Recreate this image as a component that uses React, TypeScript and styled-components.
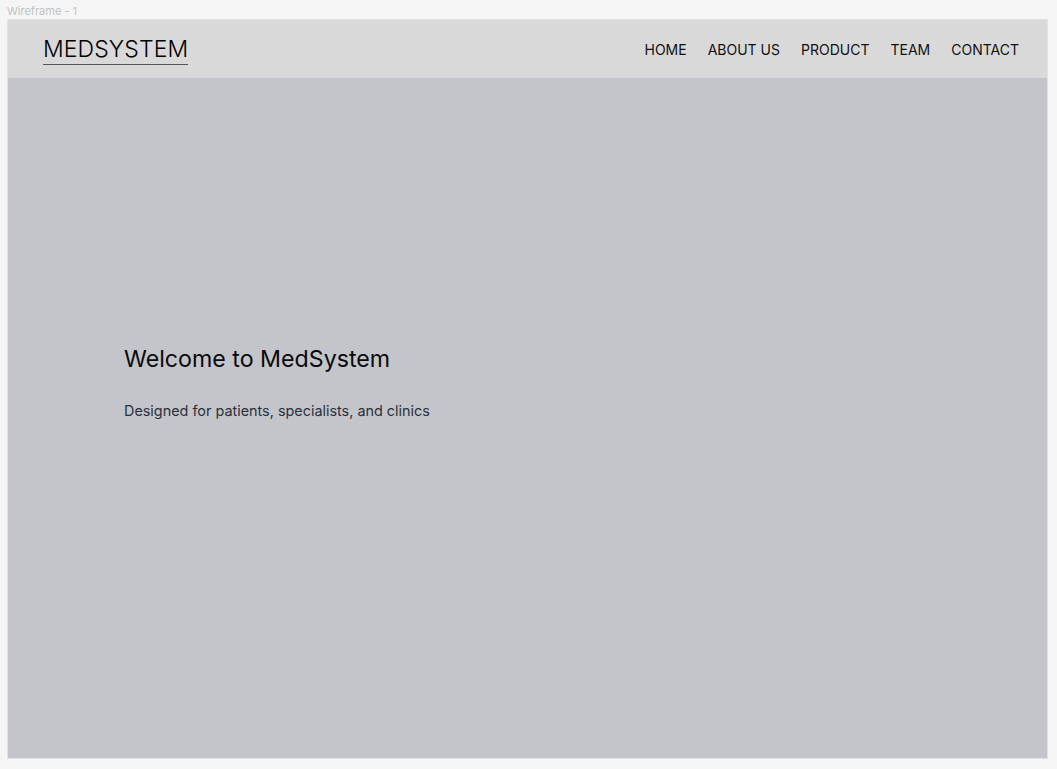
import React from "react";
import styled, { createGlobalStyle } from "styled-components";

const Global = createGlobalStyle`
  html, body { margin: 0; padding: 0; background: #f5f5f5; }
  body { font-family: Inter, "Noto Sans", sans-serif; }
`;

const Page = styled.div`
  width: 1057px;
  height: 769px;
  box-sizing: border-box;
  padding: 4px 0 0 7px;
  display: flex;
  flex-direction: column;
`;

const FrameLabel = styled.div`
  font-size: 11px;
  line-height: 14px;
  color: #c2c2c2;
  height: 14px;
  margin-bottom: 1px;
`;

const Frame = styled.div`
  width: 1041px;
  height: 740px;
  box-sizing: border-box;
  border: 1px solid #e2e2e6;
  display: flex;
  flex-direction: column;
  background: #c4c5ca;
`;

const Header = styled.header`
  height: 58px;
  flex-shrink: 0;
  background: #d9d9d9;
  display: flex;
  align-items: center;
  justify-content: space-between;
  padding: 0 28px 0 35px;
`;

const Logo = styled.div`
  font-size: 23px;
  font-weight: 300;
  color: #000;
  letter-spacing: 0.1px;
  border-bottom: 1px solid #555;
  line-height: 27px;
  padding-bottom: 1px;
  margin-top: 2px;
`;

const Nav = styled.nav`
  display: flex;
  gap: 21px;
  margin-top: 2px;
`;

const NavItem = styled.a`
  font-size: 14px;
  color: #111;
  text-decoration: none;
  line-height: 20px;
`;

const Hero = styled.section`
  flex: 1;
  display: flex;
  flex-direction: column;
  justify-content: center;
  padding: 0 0 72px 116px;
`;

const Title = styled.h1`
  margin: 0;
  font-size: 23.2px;
  font-weight: 400;
  color: #0a0a0a;
  line-height: 30px;
`;

const Subtitle = styled.p`
  margin: 27px 0 0;
  font-size: 14.4px;
  color: #2a313c;
  line-height: 20px;
`;

export default function App() {
  return (
    <>
      <Global />
      <Page>
        <FrameLabel>Wireframe - 1</FrameLabel>
        <Frame>
          <Header>
            <Logo>MEDSYSTEM</Logo>
            <Nav>
              {["HOME", "ABOUT US", "PRODUCT", "TEAM", "CONTACT"].map((n) => (
                <NavItem key={n}>{n}</NavItem>
              ))}
            </Nav>
          </Header>
          <Hero>
            <Title>Welcome to MedSystem</Title>
            <Subtitle>Designed for patients, specialists, and clinics</Subtitle>
          </Hero>
        </Frame>
      </Page>
    </>
  );
}
